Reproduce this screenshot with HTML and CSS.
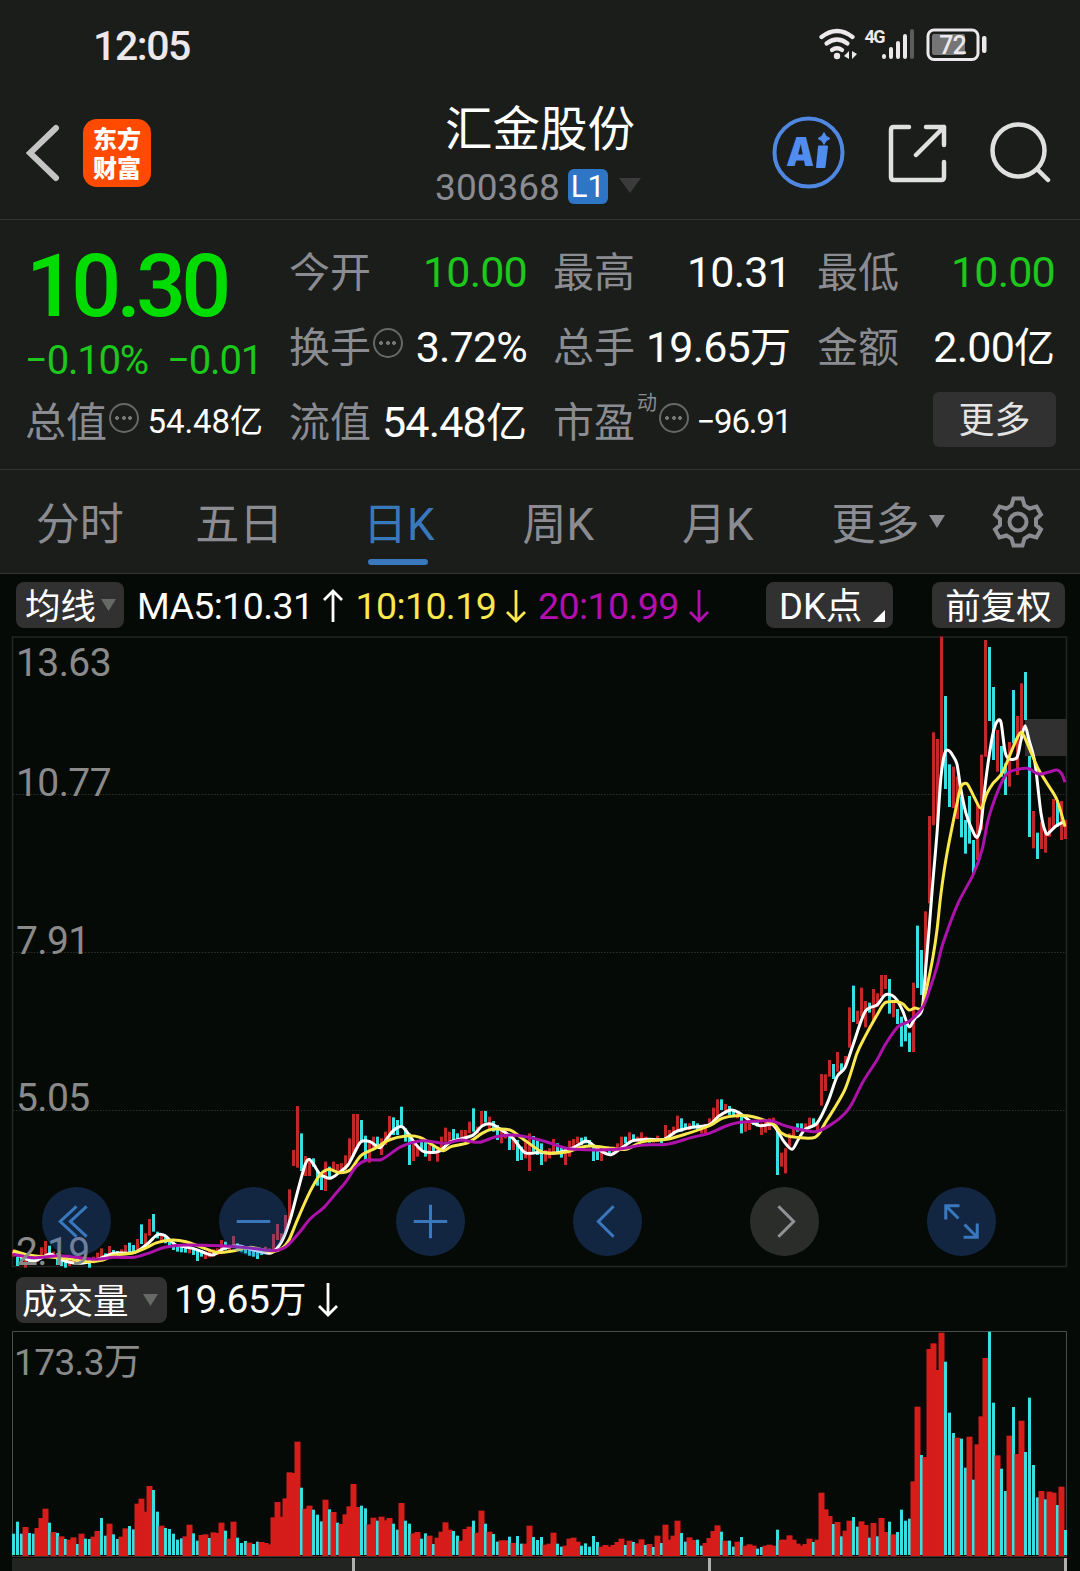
FILE: index.html
```html
<!DOCTYPE html>
<html lang="zh-CN">
<head>
    <meta charset="UTF-8">
    <meta name="viewport" content="width=device-width, initial-scale=1.0">
    <title>汇金股份 300368</title>
    <link rel="stylesheet" href="styles.css">
</head>
<body>
    <div class="status-bar">
        <span class="clock">12:05</span>
        <svg class="status-icons" width="170" height="40" viewBox="818 22 170 40">
            <g fill="none" stroke="#ece8ec" stroke-width="4.200" stroke-linecap="round">
                <path d="M821.500 35 Q837 23 852.500 35"/>
                <path d="M826.500 41.500 Q837 33.500 847.500 41.500"/>
                <path d="M832 48 Q837 44.500 842 48"/>
            </g>
            <circle cx="837" cy="54" r="3.200" fill="#ece8ec"/>
            <path d="M844 54 L849 49 V57 M852 49 V57 L857 52 Z" fill="#ece8ec"/>
            <text class="net" x="864.500" y="40.500">4G</text>
            <g stroke="#ece8ec" stroke-width="4" stroke-linecap="round">
                <path d="M884 54V55M891 47V55M898 41V55M905 34V55"/>
                <path d="M912 29V55" stroke="#5b5c5b"/>
            </g>
            <rect x="928" y="28" width="50" height="29.500" rx="6" fill="none" stroke="#ece8ec" stroke-width="3"/>
            <rect x="932" y="32" width="33" height="21" rx="2" fill="#747574"/>
            <rect x="982" y="34" width="4.500" height="17" rx="2" fill="#ece8ec"/>
            <text class="battery" x="952.500" y="51.500">72</text>
        </svg>
    </div>

    <header class="header">
        <div class="header-left">
            <svg width="34" height="60" viewBox="26 123 34 60">
                <path d="M56 128 L30 153 L56 178" fill="none" stroke="#c4c4c4" stroke-width="6" stroke-linecap="round"/>
            </svg>
            <div class="logo">东方<br>财富</div>
        </div>
        <div class="header-title">
            <h1>汇金股份</h1>
            <div class="code">
                <span>300368</span>
                <span class="level">L1</span>
                <svg width="22" height="15" viewBox="0 0 22 15"><path d="M0 0H22L11 15Z" fill="#3a3b3a"/></svg>
            </div>
        </div>
        <div class="header-right">
            <svg width="74" height="74" viewBox="772 116 74 74">
                <circle cx="808.500" cy="152.500" r="34" fill="none" stroke="#5087e0" stroke-width="4"/>
                <text class="ai" transform="translate(786 166) scale(.88 1) skewX(-3)">A</text>
                <path d="M819 146.500H827L824.500 167H817Z" fill="#518cf0" stroke="#518cf0" stroke-width="2" stroke-linejoin="round"/>
                <path d="M824 132.500Q825.500 137 830 138.500Q825.500 140 824 144.500Q822.500 140 818 138.500Q822.500 137 824 132.500Z" fill="#518cf0" stroke="#518cf0"/>
            </svg>
            <svg width="60" height="60" viewBox="886 122 60 60">
                <g fill="none" stroke="#e0e0e0" stroke-width="4.500" stroke-linecap="round" stroke-linejoin="round">
                    <path d="M908 126H893Q890 126 890 129V176Q890 179 893 179H940Q943 179 943 176V161"/>
                    <path d="M925 126H943V144M943 126L915 154"/>
                </g>
            </svg>
            <svg width="62" height="62" viewBox="989 121 62 62">
                <g fill="none" stroke="#e0e0e0" stroke-width="4.500" stroke-linecap="round">
                    <circle cx="1018.500" cy="149.500" r="26"/>
                    <path d="M1038 169L1048 179"/>
                </g>
            </svg>
        </div>
    </header>

    <section class="quote">
        <div class="price-block">
            <div class="price">10.30</div>
            <div class="change"><span>−0.10%</span><span>−0.01</span></div>
        </div>
        <div class="cell"><label>今开</label><b class="down">10.00</b></div>
        <div class="cell"><label>最高</label><b>10.31</b></div>
        <div class="cell"><label>最低</label><b class="down">10.00</b></div>
        <div class="cell"><label>换手</label><i class="dots"></i><b>3.72%</b></div>
        <div class="cell"><label>总手</label><b>19.65<em>万</em></b></div>
        <div class="cell"><label>金额</label><b>2.00<em>亿</em></b></div>
        <div class="cell"><label>总值</label><i class="dots"></i><b class="small">54.48<em>亿</em></b></div>
        <div class="cell"><label>流值</label><b>54.48<em>亿</em></b></div>
        <div class="cell"><label>市盈</label><sup>动</sup><i class="dots"></i><b class="small neg">−96.91</b></div>
        <div class="cell"><button class="btn-more">更多</button></div>
    </section>

    <nav class="tabs">
        <a class="tab">分时</a>
        <a class="tab">五日</a>
        <a class="tab active">日K</a>
        <a class="tab">周K</a>
        <a class="tab">月K</a>
        <a class="tab more">更多<svg width="16" height="13" viewBox="0 0 16 13"><path d="M0 0H16L8 13Z" fill="#8b8b92"/></svg></a>
        <svg class="gear" width="54" height="54" viewBox="-27 -27 54 54">
            <g fill="none" stroke="#8b8b92" stroke-width="4">
                <path d="M-4.500 -23.500H4.500L6.500 -16.500L11.500 -13.500L18.500 -15.500L23 -7.500L18 -3V3L23 7.500L18.500 15.500L11.500 13.500L6.500 16.500L4.500 23.500H-4.500L-6.500 16.500L-11.500 13.500L-18.500 15.500L-23 7.500L-18 3V-3L-23 -7.500L-18.500 -15.500L-11.500 -13.500L-6.500 -16.500Z"/>
                <circle r="8.500"/>
            </g>
        </svg>
    </nav>

    <main class="charts">
        <div class="ma-row">
            <span class="chip chip-ma">均线<svg width="15" height="12" viewBox="0 0 15 12"><path d="M0 0H15L7.500 12Z" fill="#666966"/></svg></span>
            <span class="ma ma5">MA5:10.31<svg class="arrow" viewBox="0 0 20 34"><path d="M10 33V2M1 11L10 2L19 11"/></svg></span>
            <span class="ma ma10">10:10.19<svg class="arrow" viewBox="0 0 20 34"><path d="M10 1V32M1 23L10 32L19 23"/></svg></span>
            <span class="ma ma20">20:10.99<svg class="arrow" viewBox="0 0 20 34"><path d="M10 1V32M1 23L10 32L19 23"/></svg></span>
            <span class="chip chip-dk">DK点<svg width="12" height="12" viewBox="0 0 12 12"><path d="M12 0V12H0Z" fill="#fff"/></svg></span>
            <span class="chip chip-fq">前复权</span>
        </div>

        <div class="price-chart">
            <svg width="1080" height="632" viewBox="0 0 1080 632">
                <rect x="12.500" y="1" width="1054" height="629.500" fill="none" stroke="#242624" stroke-width="1.500"/>
                <path d="M13 158.500H1066M13 316.500H1066M13 474.500H1066" stroke="#2d302d" stroke-dasharray="1.500 1.500"/>
                <rect x="1025" y="83" width="42" height="37" fill="#303030"/>
                <g id="candles"></g>
                <g id="lines" fill="none" stroke-width="3" stroke-linejoin="round"></g>
                <g class="axis">
                    <text x="16" y="40">13.63</text>
                    <text x="16" y="160">10.77</text>
                    <text x="16" y="318">7.91</text>
                    <text x="16" y="475">5.05</text>
                    <text x="16" y="628.500">2.19</text>
                </g>
            </svg>
            <div class="controls">
                <button class="ctl"><svg viewBox="-34 -34 68 68"><path d="M0 -15L-16 0L0 15M10 -15L-6 0L10 15"/></svg></button>
                <button class="ctl"><svg viewBox="-34 -34 68 68"><path d="M-16.500 0H16.500"/></svg></button>
                <button class="ctl"><svg viewBox="-34 -34 68 68"><path d="M-16.500 0H16.500M0 -16.500V16.500"/></svg></button>
                <button class="ctl"><svg viewBox="-34 -34 68 68"><path d="M6 -15L-9 0L6 15"/></svg></button>
                <button class="ctl off"><svg viewBox="-34 -34 68 68"><path d="M-6 -15L9 0L-6 15"/></svg></button>
                <button class="ctl"><svg viewBox="-34 -34 68 68"><path d="M-2 -15.500H-15.500V-2M-15 -15L-3 -3M2 15.500H15.500V2M15 15L3 3"/></svg></button>
            </div>
        </div>

        <div class="vol-row">
            <span class="chip chip-vol">成交量<svg width="15" height="12" viewBox="0 0 15 12"><path d="M0 0H15L7.500 12Z" fill="#666966"/></svg></span>
            <span class="vol">19.65<em>万</em></span>
            <svg class="arrow" viewBox="0 0 20 34"><path d="M10 0V32M1 23L10 32L19 23"/></svg>
        </div>

        <svg class="vol-chart" width="1080" height="227" viewBox="0 0 1080 227">
            <path d="M12.500 226V.5H1066.500V226" fill="none" stroke="#4a4b4a"/>
            <g id="volumes"></g>
            <path d="M12 225.500H1067" stroke="#4b3030"/>
            <text class="axis axis-vol" x="14" y="44">173.3万</text>
        </svg>
        <div class="timeline"><i></i><i></i><i></i></div>
    </main>

    <script src="script.js"></script>
</body>
</html>
```
FILE: styles.css
```css
* {
    margin: 0;
    padding: 0;
    box-sizing: border-box;
}

body {
    width: 1080px;
    height: 1571px;
    overflow: hidden;
    background: #1a1d1a;
    color: #fff;
    font-family: Roboto, "Noto Sans CJK SC", sans-serif;
}

svg {
    display: block;
    flex: none;
}

button {
    border: none;
    font-family: inherit;
}

em, i {
    font-style: normal;
}

/* status bar */
.status-bar {
    height: 88px;
    padding: 0 92px 0 93px;
    display: flex;
    align-items: center;
    justify-content: space-between;
}

.clock {
    font-size: 41px;
    font-weight: 500;
    color: #ece8ec;
    letter-spacing: -1.4px;
    padding-top: 3px;
}

.net {
    font-size: 18px;
    font-weight: 700;
    fill: #ece8ec;
    letter-spacing: -1.5px;
}

.battery {
    font-size: 25px;
    font-weight: 500;
    fill: #ece8ec;
    text-anchor: middle;
    letter-spacing: -1px;
}

/* header */
.header {
    height: 132px;
    border-bottom: 1px solid #323532;
    display: grid;
    grid-template-columns: 1fr auto 1fr;
}

.header-left {
    display: flex;
    align-items: center;
    gap: 23px;
    padding: 0 0 2px 26px;
}

.logo {
    width: 68px;
    height: 68px;
    border-radius: 14px;
    background: #ff4a00;
    font: 900 24px/29px "Noto Sans CJK SC", sans-serif;
    text-align: center;
    padding-top: 4px;
}

.header-title {
    text-align: center;
    padding-top: 16px;
}

.header-title h1 {
    font-weight: 400;
    font-size: 47.5px;
    line-height: 52px;
}

.code {
    display: flex;
    align-items: center;
    justify-content: center;
    height: 38px;
    margin-top: 12px;
    font-size: 37px;
    color: #8b8b92;
    padding-right: 4px;
}

.code svg {
    margin: -3px 0 0 11px;
}

.level {
    width: 40px;
    height: 35px;
    margin: -2px 0 0 8px;
    border-radius: 6px;
    background: #2e75c6;
    color: #fff;
    font-size: 31px;
    line-height: 36px;
}

.header-right {
    display: flex;
    align-items: center;
    justify-content: flex-end;
    gap: 41px;
    padding: 0 29px 2px 0;
}

.header-right svg:nth-child(2) {
    margin-right: 1px;
}

.ai {
    font: 900 40px "Inter", sans-serif;
    fill: #518cf0;
}

/* quote */
.quote {
    height: 250px;
    border-bottom: 1px solid #323532;
    padding: 14px 24px 0 25px;
    display: grid;
    grid-template-columns: repeat(4, 238px);
    grid-template-rows: repeat(3, 75px);
    column-gap: 26px;
}

.price-block {
    grid-row: span 2;
    color: #00dc00;
}

.price {
    font-size: 88px;
    font-weight: 500;
    line-height: 103px;
    letter-spacing: -4.8px;
    padding-left: 1px;
}

.change {
    font-size: 40px;
    line-height: 48px;
    letter-spacing: -1.2px;
    color: #1bc81b;
    display: flex;
    justify-content: space-between;
    padding-right: 1px;
}

.cell {
    display: flex;
    align-items: center;
    font-size: 43px;
}

.cell label {
    font-size: 41px;
    color: #8b8b92;
    margin-top: -6px;
}

.cell b {
    margin-left: auto;
    font-weight: 400;
    letter-spacing: -0.8px;
    white-space: nowrap;
}

.cell em {
    font-size: 41px;
    line-height: 40px;
    letter-spacing: 0;
}

.cell .down {
    color: #1bc81b;
}

.cell .small {
    font-size: 33px;
    letter-spacing: -0.1px;
}

.cell .small.neg {
    letter-spacing: -1.2px;
}

.cell .small em {
    font-size: 33px;
}

.cell sup {
    font-size: 20px;
    line-height: 20px;
    color: #8b8b92;
    align-self: flex-start;
    margin: 9px 1px 0 2px;
}

.dots {
    width: 30px;
    height: 30px;
    border: 2.5px solid #676866;
    border-radius: 50%;
    margin: 0 0 8px 2px;
    background:
        radial-gradient(circle at 6px 50%, #777 1.7px, transparent 2.2px),
        radial-gradient(circle at 50% 50%, #777 1.7px, transparent 2.2px),
        radial-gradient(circle at 19px 50%, #777 1.7px, transparent 2.2px);
}

sup + .dots {
    margin-left: 1px;
}

.btn-more {
    width: 123px;
    height: 55px;
    margin: -5px -1px 0 auto;
    border-radius: 6px;
    background: #313131;
    color: #e4e4e4;
    font-size: 36px;
    line-height: 50px;
    padding-top: 3px;
}

/* tabs */
.tabs {
    height: 104px;
    border-bottom: 1px solid #323532;
    display: flex;
    align-items: center;
}

.tab {
    position: relative;
    width: 159.5px;
    height: 103px;
    text-align: center;
    font-size: 44px;
    line-height: 111px;
    color: #8b8b92;
}

.tab.active {
    color: #3a78be;
}

.tab.active::after {
    content: "";
    position: absolute;
    left: 49px;
    bottom: 8px;
    width: 60px;
    height: 6px;
    border-radius: 3px;
    background: #3a78be;
}

.tab.more {
    width: 181px;
    display: flex;
    align-items: flex-start;
    justify-content: center;
    gap: 9px;
}

.tab.more svg {
    margin-top: 45px;
}

.gear {
    margin-left: 12px;
}

/* charts */
.charts {
    height: 997px;
    background: #060a07;
}

.chip {
    height: 46px;
    border-radius: 8px;
    background: #313131;
    font-size: 35.5px;
    line-height: 44px;
    padding-top: 4px;
    display: flex;
    align-items: center;
    flex: none;
}

.chip svg {
    margin-top: -4px;
}

.ma-row {
    height: 62px;
    padding: 0 15px 0 16px;
    display: flex;
    align-items: center;
}

.chip-ma {
    width: 108px;
    padding-left: 9px;
    gap: 5px;
}

.ma {
    font-size: 37.5px;
    letter-spacing: -0.6px;
    padding-top: 2px;
    display: flex;
    align-items: center;
}

.arrow {
    width: 20px;
    height: 34px;
    fill: none;
    stroke: currentColor;
    stroke-width: 2.8;
}

.ma .arrow {
    margin-left: 10px;
}

.ma5 {
    margin-left: 13px;
}

.ma10 {
    margin-left: 12px;
    color: #fbe74e;
}

.ma20 {
    margin-left: 12px;
    color: #b30fb0;
}

.chip-dk {
    width: 127px;
    margin-left: auto;
    padding-left: 13px;
    gap: 11px;
    font-size: 36.5px;
}

.chip-dk svg {
    margin-top: 17px;
}

.chip-fq {
    width: 133px;
    margin-left: 39px;
    justify-content: center;
}

.price-chart {
    position: relative;
    height: 632px;
}

.price-chart > svg {
    overflow: visible;
}

.axis {
    font-size: 39px;
    fill: #8a8a8a;
    letter-spacing: -0.6px;
}

.axis-vol {
    font-size: 37px;
}

.controls {
    position: absolute;
    left: 0;
    right: 0;
    bottom: 12px;
    padding: 0 84px 0 42px;
    display: flex;
    justify-content: space-between;
}

.ctl {
    width: 69px;
    height: 69px;
    border-radius: 50%;
    background: rgba(48, 106, 204, 0.3);
    color: #3a78be;
}

.ctl svg {
    width: 69px;
    height: 69px;
    fill: none;
    stroke: currentColor;
    stroke-width: 3;
}

.ctl.off {
    background: rgba(130, 130, 125, 0.3);
    color: #929296;
}

.vol-row {
    height: 63px;
    padding-left: 16px;
    display: flex;
    align-items: center;
}

.chip-vol {
    width: 151px;
    padding-left: 6px;
    gap: 14px;
}

.vol {
    margin-left: 7px;
    padding-top: 1px;
    font-size: 39px;
    line-height: 50px;
    letter-spacing: -0.5px;
}

.vol em {
    font-size: 37px;
    line-height: 40px;
}

.vol-row .arrow {
    margin-left: 12px;
}

.timeline {
    height: 13px;
    margin: 0 13px 0 12px;
    background: #222422;
    display: flex;
}

.timeline i {
    flex: 1;
    border-right: 3px solid #b0b0b0;
}

.timeline i:first-child {
    flex: 0 0 343px;
}
```
FILE: script.js
```javascript
const NS = 'http://www.w3.org/2000/svg';
const RED = '#c42727';
const CYAN = '#35dfe2';

// one entry per day: direction + top of the volume bar (thirds of a pixel)
const volumes = `
C642 C606 C642 R622 C640 C642 R625 R595 R567 C609 R637 C640 R650 C658 R660 R653 C673 R642 C657 C658
R651 R634 C595 C648 R612 C644 C658 R651 R626 C619 C629 R552 R537 R576 R499 C511 C576 R618 C625 C628
C642 C660 C656 R650 R615 C641 C663 R646 R644 C655 R638 R640 R609 C633 R657 R606 C654 C670 C664 R669
C673 C666 R667 R670 R674 R593 R547 R591 R536 R458 R460 R366 C504 R567 R558 C570 C585 C605 R540 C569
R577 C609 R613 R584 R560 R493 R562 C558 C566 R614 R594 C603 R591 R602 R595 C612 C630 R550 C603 C612
R641 R637 C657 C641 R648 C673 R654 R636 R608 R630 C634 C648 R663 R628 R621 C603 R639 R573 C612 R636
C643 C666 R662 R662 C651 R670 C649 C672 R672 R618 C652 C661 C652 R675 R672 R639 C672 C681 R678 R657
R654 R666 C678 C671 C681 C649 C667 R681 R676 R681 R676 R667 R657 C676 R663 C667 R671 R659 C676 R673
C682 R648 C670 R615 R660 R648 R603 C640 C666 R653 R661 C660 C678 R670 R655 R634 R617 C636 R663 C663
C681 R666 C652 R678 R674 R678 C687 C682 R678 R675 R678 C630 R660 R660 R647 R660 R672 R678 R673 R657
C667 R660 R519 R569 R589 C613 R607 C650 R633 R603 C592 C621 R605 R616 C654 R610 C650 R595 R637 C606
R644 C637 C570 C603 C597 R485 R261 C406 R412 R88 R71 R151 R39 C126 C279 C340 R354 C357 C444 R351
C480 R374 R290 R115 C36 C249 R407 C447 C514 R348 C262 R403 R303 C397 C234 C436 C533 R514 C539 R516
R519 C556 R501 C631`.trim().split(/\s+/);

// direction + high-low, measured from the lower part of the chart
const lowCandles = `
R480-500 C500-528 C490-515 R510-533 C500-520 C500-518 R495-515 R472-500 R453-495 C467-492
R485-505 C490-525 C500-528 C508-533 R505-528 R500-520 C503-522 R500-518 C505-522 C510-533
R500-520 R488-512 R475-505 C490-505 R468-500 C480-500 C483-498 R478-495 R465-490 C458-488
C465-490 R447-480 C403-462 R430-465 R387-437 C372-425 C425-445 R432-455 C440-460 C455-472
C455-480 C465-485 C467-487 C470-488 R468-490 C475-495 C480-513 C480-500 R485-507 R480-502
R478-500 R475-495 R450-485 C455-480 R468-485 R438-470 C460-482 C465-485 C470-490 C470-497
C475-500 C480-507 C475-495 R470-490 R475-493 R432-485 R402-450 R430-460 R375-430 R298-400
R180-228 R48-233 C130-243 R198-258 R205-258 C205-230 C240-287 C252-300 R215-303 C230-262
R215-245 R222-245 R220-250 R196-240 R145-220 R72-200 R72-175 C90-155 C137-212 R150-218
R140-180 C140-175 R145-195 R125-165 R78-150 C82-135 C90-135 C50-108 C115-155 C130-225
R160-213 R165-200 C155-180 C155-200 R165-213 C165-190 R170-215 R140-180 R113-155 R125-160
C117-150 C130-155 R120-150 R120-140 R95-130 C55-125 R110-130 R63-105 C63-97 R80-120
C93-125 C105-150 R120-160 R120-145 C130-180 R140-180 C150-213 C170-210 R150-205 R130-243
C138-185 C150-195 C160-225 R180-215 R175-205 R147-195 C160-190 C170-203 R175-225 R152-200
R147-172 R140-160 C143-165 C140-160 C150-170 C165-213 C178-210 R180-213 R175-195 C175-190
R170-190 R160-180 R140-170 C140-160 R127-160 C133-155 R140-155 R127-150 R140-152 C145-158
R145-158 R137-155 C145-160 R105-145 R120-140 R110-135 R77-125 C85-125 C100-120 R100-120
C93-115 C100-120 R108-130 R105-130 R85-110 R53-105 R28-80 C28-60 R42-70 C48-75
C60-80 R65-85 C80-130 R95-125 R90-120 C90-105 C95-110 R100-135 R95-128 R85-120
R83-105 C120-255 R188-230 R175-250 R130-170 R112-140 C100-125 C100-120 R100-120 R83-115
C85-110 R100-125`.trim().split(/\s+/);

// same, measured from the top of the chart
const highCandles = `
R1332-1427 R1333-1383 R1290-1340 C1302-1347 R1266-1325 C1300-1325 R1278-1310 R1132-1253 C1067-1176 R1142-1182
R1073-1160 R1113-1192 C1118-1148 R1077-1172 R1090-1130 R1035-1100 R1035-1077 C1047-1151 R1110-1162 C1137-1182
C1160-1250 C1180-1234 C1208-1266 R1058-1266 C887-1074 C960-1095 R844-1060 R558-820 R307-586 R327-575
R20-417 C198-477 C403-531 R410-534 R440-567 C500-622 C570-671 C498-641 C630-732 R520-690
R374-600 R30-380 C51-273 C171-390 R300-425 C348-440 C400-495 R336-470 C180-340 R258-435
R160-330 C126-270 C378-621 R543-655 C608-687 R575-657 R600-668 R562-620 R507-592 C510-590
R513-630 R570-627`.trim().split(/\s+/);

const averages = [
    ['#fff', `13,1865 21,1880 34,1893 50,1872 60,1888 77,1900 93,1893 114,1870 134,1868 148,1840 157,1815 165,1817 176,1845
        193,1855 212,1875 224,1855 238,1847 251,1858 269,1870 277,1855 284,1820 291,1760 298,1680 305,1605 309,1588 314,1605
        320,1632 330,1645 339,1628 348,1605 355,1565 361,1535 370,1535 380,1553 387,1525 394,1500 402,1490 408,1510 415,1540
        424,1565 439,1564 451,1535 472,1517 482,1488 491,1482 499,1495 513,1525 525,1568 540,1567 550,1570 562,1565 574,1552
        586,1533 593,1545 602,1565 611,1574 621,1555 633,1532 647,1528 664,1528 676,1505 692,1492 709,1485 719,1458 731,1440
        740,1450 750,1473 760,1487 772,1483 778,1505 784,1535 792,1558 798,1530 805,1498 817,1480 828,1415 837,1340 845,1313
        853,1245 865,1145 877,1125 885,1095 892,1096 897,1110 903,1145 909,1190 915,1165 922,1140 925,1040 929,900 933,750
        937,610 941,440 945,368 949,362 953,378 957,403 961,480 966,550 972,598 977,622 981,585 985,470 989,380 993,310
        997,275 1001,277 1005,365 1009,387 1017,382 1021,330 1025,287 1029,330 1035,400 1041,550 1046,610 1050,605 1056,588 1064,575`],
    ['#fbe74e', `13,1862 24,1872 34,1877 65,1885 86,1895 103,1890 114,1875 131,1870 145,1855 157,1838 172,1830 186,1835 200,1850
        217,1867 234,1862 251,1852 272,1865 282,1855 289,1830 298,1765 310,1685 320,1635 329,1618 339,1628 350,1620 361,1577
        375,1555 389,1530 406,1518 420,1522 430,1540 443,1562 451,1550 468,1538 482,1510 492,1498 510,1500 520,1520 540,1563
        550,1570 568,1565 581,1552 592,1548 612,1555 626,1558 643,1535 667,1528 688,1510 709,1488 722,1465 736,1457 753,1460
        774,1483 781,1508 791,1520 815,1522 826,1475 845,1378 857,1270 865,1220 877,1155 885,1118 897,1115 903,1122 909,1140
        915,1134 922,1134 927,1070 933,980 937,900 941,790 947,670 957,520 961,470 966,460 969,470 974,500 981,535 987,490
        993,460 1002,430 1012,360 1017,325 1022,308 1030,360 1038,415 1047,460 1057,510 1065,590`],
    ['#ad12aa', `13,1873 34,1883 62,1877 93,1888 114,1882 134,1882 148,1870 165,1852 183,1845 220,1847 248,1853 272,1862 286,1850
        300,1805 310,1767 324,1732 336,1690 346,1655 356,1610 367,1590 382,1588 401,1550 422,1532 444,1540 461,1530 479,1537
        496,1520 513,1515 540,1530 561,1550 574,1558 616,1558 643,1545 667,1543 692,1522 709,1510 726,1488 740,1477 760,1473
        772,1473 788,1490 815,1505 833,1480 845,1450 853,1415 863,1355 877,1290 885,1245 898,1190 910,1172 923,1130 930,1075
        937,1010 943,940 958,820 973,735 982,660 989,560 1002,455 1010,425 1027,415 1038,432 1048,427 1057,420 1062,433 1065,457`]
];

function add(parent, tag, attrs) {
    const el = document.createElementNS(NS, tag);
    for (const key in attrs) {
        el.setAttribute(key, attrs[key]);
    }
    document.getElementById(parent).appendChild(el);
}

function centerX(i) {
    return 13.5 + i * 4;
}

// volume bars
volumes.forEach(function(item, i) {
    const up = item[0] === 'R';
    const top = (item.slice(1) - 34) / 3;
    const w = up ? 6 : 3;
    add('volumes', 'rect', {
        x: centerX(i) - w / 2,
        y: top,
        width: w,
        height: (up ? 225 : 224) - top,
        fill: up ? '#d61d1a' : CYAN
    });
});

// candles
function drawCandle(item, i, offset) {
    const up = item[0] === 'R';
    const [high, low] = item.slice(1).split('-').map(Number);
    add('candles', 'rect', {
        x: centerX(i) - 1.5,
        y: (high + offset) / 3 - 6,
        width: 3,
        height: (low - high) / 3,
        fill: up ? RED : CYAN
    });
}

lowCandles.forEach((item, i) => drawCandle(item, i, 1380));
highCandles.forEach((item, i) => drawCandle(item, i + lowCandles.length, 0));

// moving averages, smoothed through the points
function smooth(points) {
    let d = `M${points[0]}`;
    for (let i = 0; i < points.length - 1; i++) {
        const p0 = points[i - 1] || points[i];
        const p1 = points[i];
        const p2 = points[i + 1];
        const p3 = points[i + 2] || p2;
        d += `C${p1[0] + (p2[0] - p0[0]) / 7} ${p1[1] + (p2[1] - p0[1]) / 7} ` +
            `${p2[0] - (p3[0] - p1[0]) / 7} ${p2[1] - (p3[1] - p1[1]) / 7} ${p2[0]} ${p2[1]}`;
    }
    return d;
}

averages.forEach(function([color, text]) {
    const points = text.trim().split(/\s+/).map(function(pair) {
        const [x, y] = pair.split(',').map(Number);
        return [x, y / 3 - 6];
    });
    add('lines', 'path', { d: smooth(points), stroke: color });
});
```
